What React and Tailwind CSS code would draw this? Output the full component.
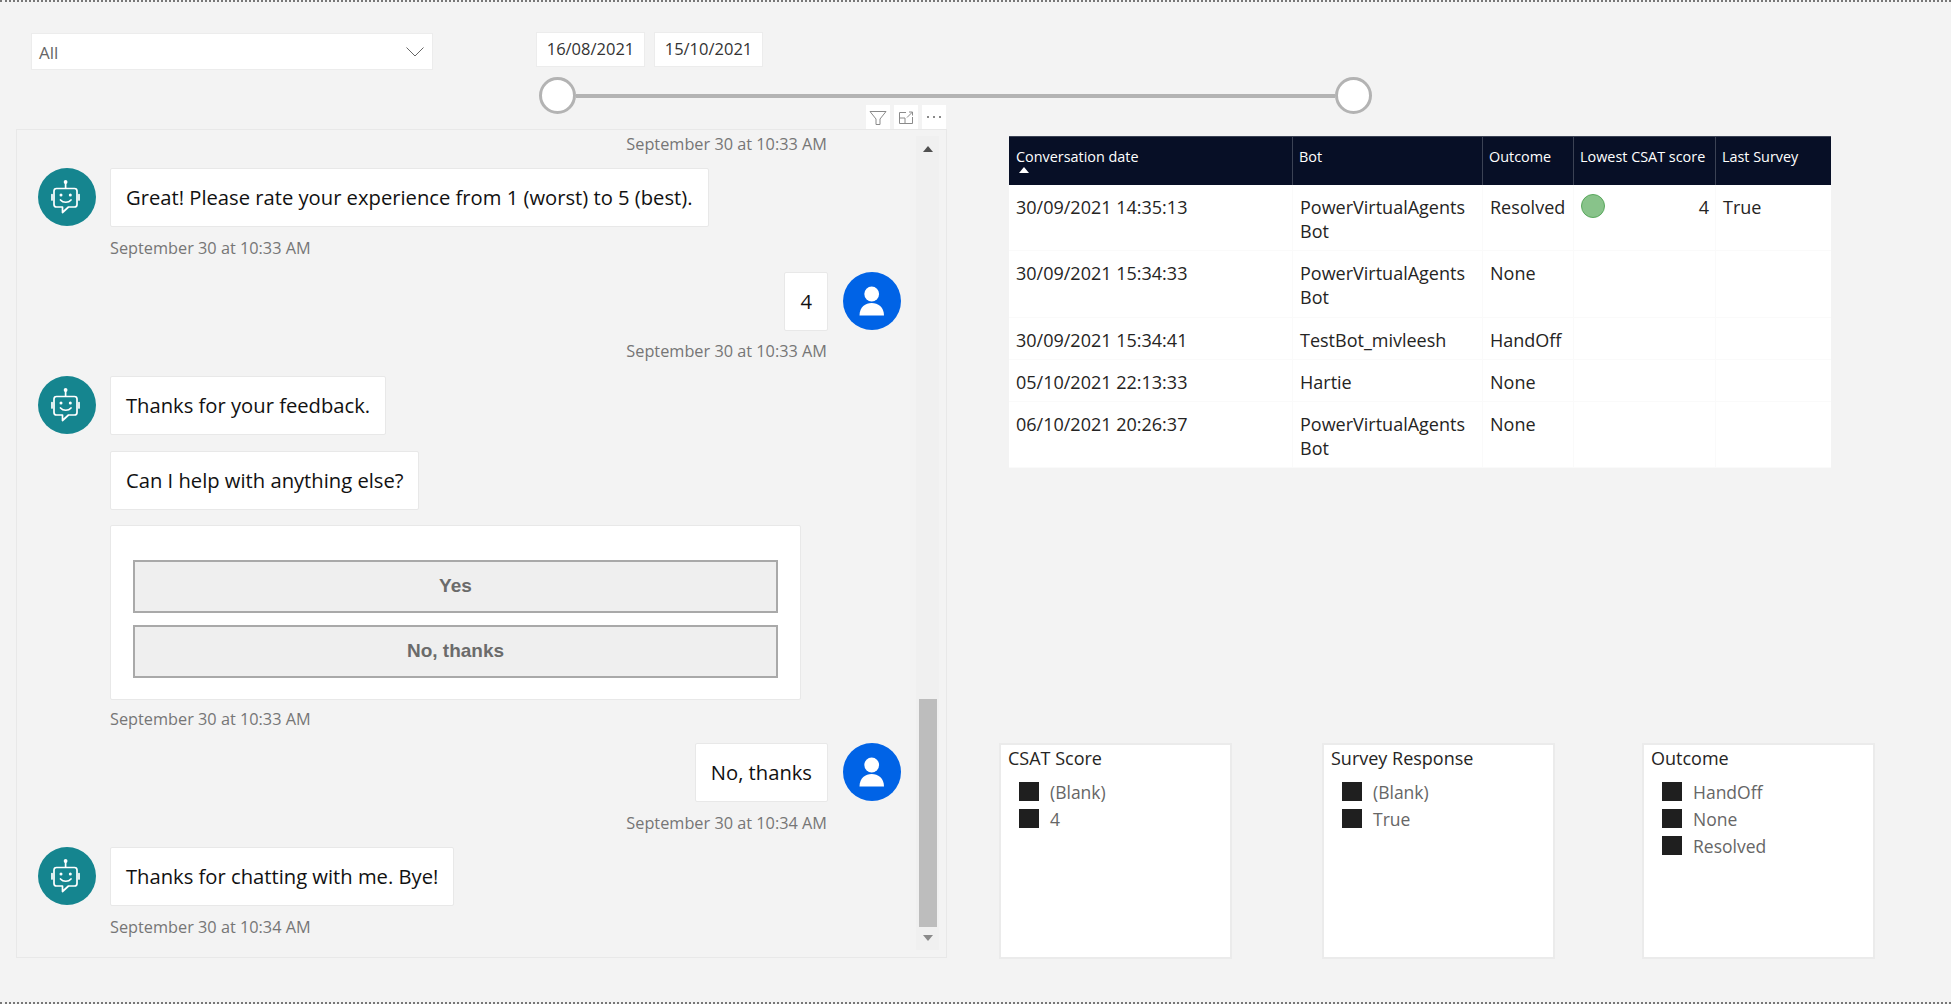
const sans = "font-['Open_Sans','Noto_Sans',sans-serif]";

function BotAvatar() {
  return (
    <svg viewBox="0 0 58 58" className="h-[58px] w-[58px] shrink-0">
      <circle cx="29" cy="29" r="29" fill="#15858f" />
      <g fill="none" stroke="#fff" strokeWidth="1.7" strokeLinejoin="round" strokeLinecap="round">
        <path d="M18.5 20.5H36.5A2.5 2.5 0 0 1 39 23V36.5A2.5 2.5 0 0 1 36.5 39H30.5L24.5 44.5V39H18.5A2.5 2.5 0 0 1 16 36.5V23A2.5 2.5 0 0 1 18.5 20.5Z" />
        <path d="M27.6 20V15" />
        <path d="M14 26.5V32M41 26.5V32" />
        <path d="M22.5 32C25 35 30.5 35 33 32" />
      </g>
      <circle cx="27.6" cy="14" r="1.9" fill="#fff" />
      <circle cx="23" cy="27" r="1.5" fill="#fff" />
      <circle cx="32.3" cy="27" r="1.5" fill="#fff" />
    </svg>
  );
}

function UserAvatar() {
  return (
    <svg viewBox="0 0 58 58" className="h-[58px] w-[58px] shrink-0">
      <circle cx="29" cy="29" r="29" fill="#0063e6" />
      <circle cx="28.7" cy="22" r="7.4" fill="#fff" />
      <path d="M16.5 43.5C16.5 35 22.5 31 28.7 31S41 35 41 43.5Z" fill="#fff" />
    </svg>
  );
}

function Stamp({ children, right, className }) {
  return (
    <p className={`h-5 text-[16.3px] leading-5 text-[#767676] ${right ? "pr-[74px] text-right" : "pl-[72px]"} ${className}`}>
      {children}
    </p>
  );
}

function Bubble({ children, className = "" }) {
  return (
    <div className={`flex h-[59px] items-center rounded-[2px] border border-[#e8e8e8] bg-white px-[15px] text-[20.2px] text-[#111] ${className}`}>
      {children}
    </div>
  );
}

function ChatButton({ children }) {
  return (
    <div className="flex h-[53px] items-center justify-center border-2 border-[#a9a9a9] bg-[#efefef] font-['Liberation_Sans',sans-serif] text-[19px] font-bold text-[#6b6b6b]">
      {children}
    </div>
  );
}

function Chat() {
  return (
    <div className="w-[863px]">
      <Stamp right className="mt-[-2px]">September 30 at 10:33 AM</Stamp>

      <div className="mt-[14px] flex gap-[14px]">
        <BotAvatar />
        <Bubble>Great! Please rate your experience from 1 (worst) to 5 (best).</Bubble>
      </div>
      <Stamp className="mt-[11px]">September 30 at 10:33 AM</Stamp>

      <div className="mt-[14px] flex justify-end gap-[15px]">
        <Bubble>4</Bubble>
        <UserAvatar />
      </div>
      <Stamp right className="mt-[10px]">September 30 at 10:33 AM</Stamp>

      <div className="mt-[15px] flex gap-[14px]">
        <BotAvatar />
        <div className="flex flex-col items-start">
          <Bubble>Thanks for your feedback.</Bubble>
          <Bubble className="mt-[16px]">Can I help with anything else?</Bubble>
          <div className="mt-[15px] flex h-[175px] w-[691px] flex-col gap-[12px] rounded-[2px] border border-[#e8e8e8] bg-white px-[22px] pt-[34px]">
            <ChatButton>Yes</ChatButton>
            <ChatButton>No, thanks</ChatButton>
          </div>
        </div>
      </div>
      <Stamp className="mt-[9px]">September 30 at 10:33 AM</Stamp>

      <div className="mt-[14px] flex justify-end gap-[15px]">
        <Bubble>No, thanks</Bubble>
        <UserAvatar />
      </div>
      <Stamp right className="mt-[11px]">September 30 at 10:34 AM</Stamp>

      <div className="mt-[14px] flex gap-[14px]">
        <BotAvatar />
        <Bubble>Thanks for chatting with me. Bye!</Bubble>
      </div>
      <Stamp className="mt-[11px]">September 30 at 10:34 AM</Stamp>
    </div>
  );
}

function Scrollbar() {
  return (
    <div className="flex h-[814px] w-[23px] shrink-0 flex-col items-center bg-[#f0f0f0]">
      <svg viewBox="0 0 10 6" className="mt-[10px] h-[6px] w-[10px]">
        <path d="M5 0L10 6H0Z" fill="#505050" />
      </svg>
      <div className="mt-[547px] h-[228px] w-[18px] bg-[#bdbdbd]" />
      <svg viewBox="0 0 10 6" className="mt-[8px] h-[6px] w-[10px]">
        <path d="M0 0H10L5 6Z" fill="#8a8a8a" />
      </svg>
    </div>
  );
}

function VisualIcons() {
  return (
    <div className="absolute right-0 top-[-25px] flex gap-1">
      <div className="h-[24px] w-[24px] bg-white">
        <svg viewBox="0 0 24 24" className="h-6 w-6" fill="none" stroke="#8a8a8a">
          <path d="M4 6.5H20L14 14V19.5H10V14Z" />
        </svg>
      </div>
      <div className="h-[24px] w-[24px] bg-white">
        <svg viewBox="0 0 24 24" className="h-6 w-6" fill="none" stroke="#8a8a8a">
          <path d="M12 7.5H5.5V18.5H18.5V12M5.5 13H11V18.5M13 12.5L18.5 7M15 7H18.5V10.5" />
        </svg>
      </div>
      <div className="flex h-[24px] w-[24px] items-center justify-center gap-[4px] bg-white">
        <span className="h-[2px] w-[2px] bg-[#8a8a8a]" />
        <span className="h-[2px] w-[2px] bg-[#8a8a8a]" />
        <span className="h-[2px] w-[2px] bg-[#8a8a8a]" />
      </div>
    </div>
  );
}

const gridCols = "grid grid-cols-[283px_190px_91px_142px_116px]";

const rows = [
  { date: "30/09/2021 14:35:13", bot: "PowerVirtualAgents Bot", outcome: "Resolved", score: "4", survey: "True", h: "h-[66px]" },
  { date: "30/09/2021 15:34:33", bot: "PowerVirtualAgents Bot", outcome: "None", h: "h-[67px]" },
  { date: "30/09/2021 15:34:41", bot: "TestBot_mivleesh", outcome: "HandOff", h: "h-[42px]" },
  { date: "05/10/2021 22:13:33", bot: "Hartie", outcome: "None", h: "h-[42px]" },
  { date: "06/10/2021 20:26:37", bot: "PowerVirtualAgents Bot", outcome: "None", h: "h-[66px]" },
];

function ConversationTable() {
  const headers = ["Bot", "Outcome", "Lowest CSAT score", "Last Survey"];
  return (
    <div className="ml-[10px] mt-[7px] w-[822px] bg-white">
      <div className={`${gridCols} h-[49px] border-t border-[#3b4254] bg-[#070f26] text-[14.4px] text-white`}>
        <div className="pl-[7px] pt-[11px] leading-[18px]">
          <p>Conversation date</p>
          <svg viewBox="0 0 10 6" className="ml-[3px] mt-[1px] h-[6px] w-[10px]">
            <path d="M5 0L10 6H0Z" fill="#fff" />
          </svg>
        </div>
        {headers.map((label) => (
          <div key={label} className="border-l border-[#3b4254] pl-[6px] pt-[11px] leading-[18px]">
            {label}
          </div>
        ))}
      </div>
      {rows.map((row) => (
        <div key={row.date} className={`${gridCols} ${row.h} border-b border-[#fafafa] text-[18px] leading-[24px] text-[#252423]`}>
          <div className="pl-[7px] pt-[10px]">{row.date}</div>
          <div className="border-l border-[#fafafa] pl-[7px] pt-[10px]">{row.bot}</div>
          <div className="border-l border-[#fafafa] pl-[7px] pt-[10px]">{row.outcome}</div>
          <div className="flex justify-between border-l border-[#fafafa] pl-[7px] pr-[6px] pt-[9px]">
            {row.score && (
              <>
                <span className="h-[24px] w-[24px] rounded-full border border-[#5aa85e] bg-[#88c38a]" />
                <span className="pt-[1px]">{row.score}</span>
              </>
            )}
          </div>
          <div className="border-l border-[#fafafa] pl-[7px] pt-[10px]">{row.survey}</div>
        </div>
      ))}
    </div>
  );
}

function Slicer({ title, items, className = "" }) {
  return (
    <div className={`h-[216px] w-[233px] border-2 border-[#ebebeb] bg-white pl-[7px] ${className}`}>
      <p className="pt-[1px] text-[18px] leading-[24px] text-[#252423]">{title}</p>
      <div className="mt-[12px] flex flex-col gap-2 pl-[11px]">
        {items.map((item) => (
          <div key={item} className="flex h-[19px] items-center gap-[11px] text-[17.5px] text-[#666]">
            <span className="h-[19px] w-[20px] bg-[#1f1f1f]" />
            <span className="pt-[2px]">{item}</span>
          </div>
        ))}
      </div>
    </div>
  );
}

export default function App() {
  return (
    <div className={`h-[1004px] w-[1951px] overflow-hidden border-y-2 border-dotted border-[#777] bg-[#f3f3f3] ${sans}`}>
      {/* slicers along the top */}
      <div className="flex h-[127px]">
        <div className="ml-[31px] mt-[31px] flex h-[37px] w-[402px] items-center justify-between border border-[#ececec] bg-white pl-[7px] pr-[8px] text-[17px] text-[#666]">
          <span className="pt-[3px]">All</span>
          <svg viewBox="0 0 18 10" className="h-[10px] w-[18px]" fill="none" stroke="#666">
            <path d="M0.5 0.5L9 9L17.5 0.5" />
          </svg>
        </div>
        <div className="ml-[103px] mt-[30px]">
          <div className="flex gap-[9px]">
            <div className="flex h-[35px] w-[109px] items-center justify-center border border-[#ececec] bg-white text-[16.5px] text-[#333]">16/08/2021</div>
            <div className="flex h-[35px] w-[109px] items-center justify-center border border-[#ececec] bg-white text-[16.5px] text-[#333]">15/10/2021</div>
          </div>
          <div className="ml-[3px] mt-[10px] flex w-[833px] items-center">
            <span className="h-[37px] w-[37px] rounded-full border-[3px] border-[#b3b3b3] bg-white" />
            <span className="h-[4px] flex-1 bg-[#b3b3b3]" />
            <span className="h-[37px] w-[37px] rounded-full border-[3px] border-[#b3b3b3] bg-white" />
          </div>
        </div>
      </div>

      <div className="flex">
        {/* chat visual */}
        <div className="relative ml-[16px] flex h-[829px] w-[931px] justify-between border border-[#e8e8e8] pl-[21px] pr-[7px] pt-[6px]">
          <VisualIcons />
          <Chat />
          <Scrollbar />
        </div>

        {/* details table and filters */}
        <div className="ml-[52px]">
          <ConversationTable />
          <div className="mt-[275px] flex">
            <Slicer title="CSAT Score" items={["(Blank)", "4"]} />
            <Slicer title="Survey Response" items={["(Blank)", "True"]} className="ml-[90px]" />
            <Slicer title="Outcome" items={["HandOff", "None", "Resolved"]} className="ml-[87px]" />
          </div>
        </div>
      </div>
    </div>
  );
}
